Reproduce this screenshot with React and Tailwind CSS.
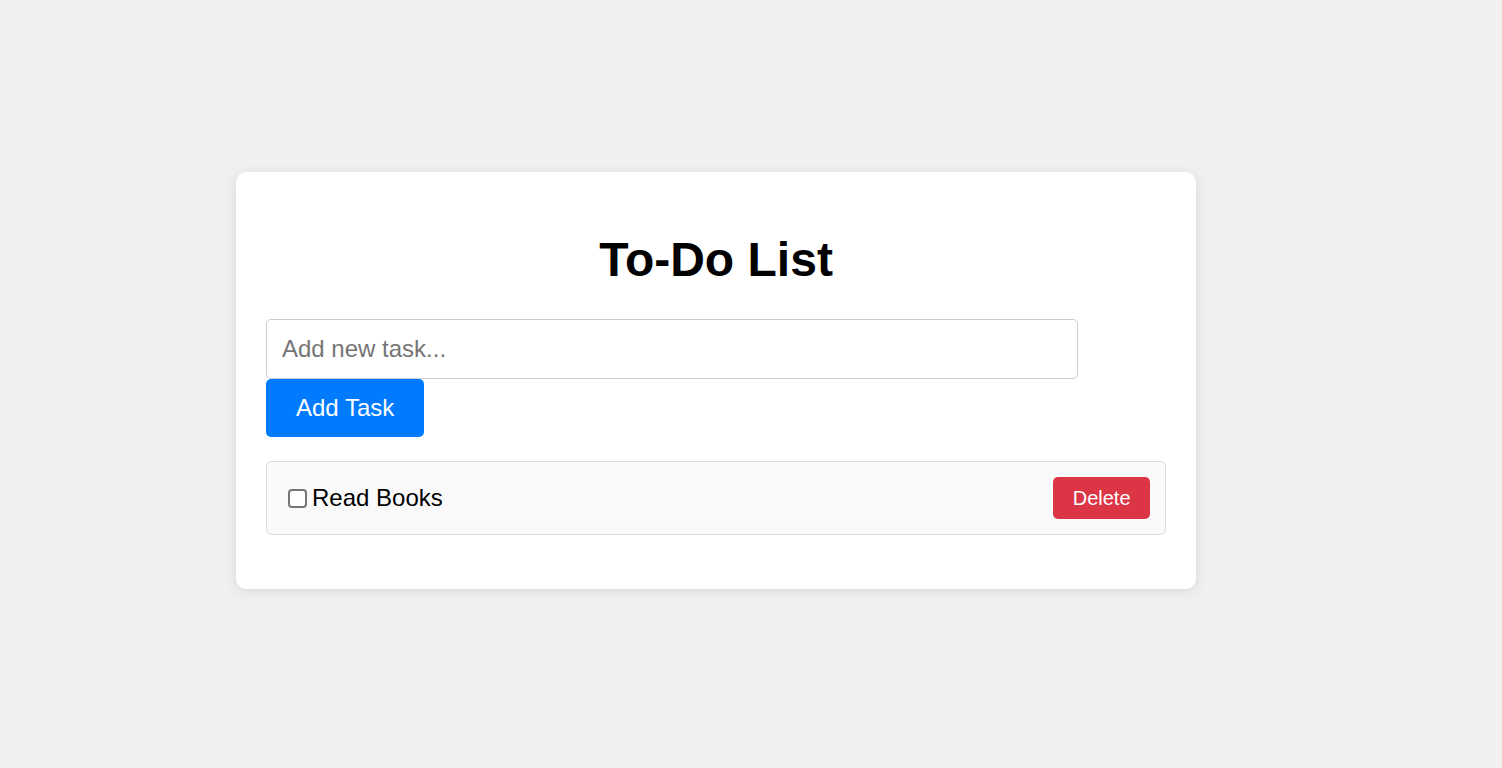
import { useState } from 'react'

const TaskItem = ({ task, onToggle, onDelete }) => (
  <li className="flex items-center justify-between bg-[#f9f9f9] border border-[#ddd] rounded-[5px] p-[15px]">
    <label className="flex items-center text-[24px] leading-[28px] text-black cursor-pointer">
      <input
        type="checkbox"
        checked={task.done}
        onChange={onToggle}
        className="appearance-none shrink-0 w-[19px] h-[19px] ml-[6px] mr-[5px] border-2 border-[#767676] rounded-[4px] bg-white checked:bg-[#007bff]"
      />
      <span className={task.done ? 'line-through' : ''}>{task.text}</span>
    </label>
    <button
      onClick={onDelete}
      className="bg-[#dc3545] text-white text-[20px] leading-[23px] px-[19.5px] py-[9.5px] rounded-[5px]"
    >
      Delete
    </button>
  </li>
)

export default function App() {
  const [tasks, setTasks] = useState([{ id: 1, text: 'Read Books', done: false }])
  const [text, setText] = useState('')

  const addTask = () => {
    if (!text.trim()) return
    setTasks([...tasks, { id: Date.now(), text: text.trim(), done: false }])
    setText('')
  }

  return (
    <div className="min-h-screen bg-[#f0f0f0] pt-[172px] pl-[236px] font-['Liberation_Sans',Arial,sans-serif]">
      <div className="w-[960px] bg-white rounded-[10px] shadow-[0_2px_12px_rgba(0,0,0,0.1)] px-[30px] pt-[30px] pb-[54px]">
        <h1 className="text-center text-[48px] leading-[55px] font-bold text-black mt-[30px] mb-[32px]">To-Do List</h1>

        <input
          type="text"
          value={text}
          onChange={(e) => setText(e.target.value)}
          placeholder="Add new task..."
          className="block w-[812px] h-[60px] px-[15px] text-[24px] border border-[#ccc] rounded-[5px] placeholder:text-[#757575] outline-none"
        />
        <button
          onClick={addTask}
          className="block h-[58px] px-[30px] bg-[#007bff] text-white text-[24px] rounded-[5px]"
        >
          Add Task
        </button>

        <ul className="mt-[24px]">
          {tasks.map((t) => (
            <TaskItem
              key={t.id}
              task={t}
              onToggle={() => setTasks(tasks.map((x) => (x.id === t.id ? { ...x, done: !x.done } : x)))}
              onDelete={() => setTasks(tasks.filter((x) => x.id !== t.id))}
            />
          ))}
        </ul>
      </div>
    </div>
  )
}
